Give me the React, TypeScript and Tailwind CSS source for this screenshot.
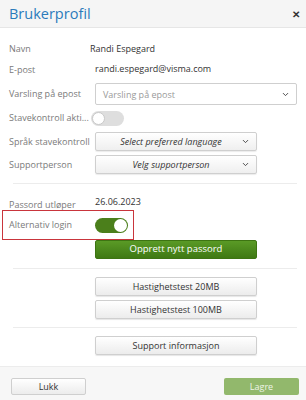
import { ChevronDown } from 'lucide-react';

const font = { fontFamily: '"Open Sans", "Liberation Sans", sans-serif' };

function Select({ text, wide, plain }: { text: string; wide?: boolean; plain?: boolean }) {
  return (
    <div
      className={`relative flex items-center border border-[#cfcfcf] rounded-[2px] ${
        wide ? 'w-[202px] h-[22px] bg-white' : 'w-[162px] h-[19px] bg-gradient-to-b from-white to-[#efefef] shadow-[0_1px_1px_rgba(0,0,0,0.08)]'
      }`}
    >
      <span
        className={`flex-1 text-[9px] leading-none whitespace-nowrap ${
          plain ? 'pl-[7px] text-[#9a9a9a]' : 'text-center italic text-[#333] pr-[10px]'
        }`}
      >
        {text}
      </span>
      <ChevronDown className="absolute right-[6px] w-[9px] h-[9px] text-[#444]" strokeWidth={2.5} />
    </div>
  );
}

function Toggle({ on }: { on?: boolean }) {
  return (
    <div
      className={`w-[33px] h-[15px] rounded-full flex items-center px-[1px] flex-shrink-0 ${
        on ? 'bg-[#4b7f1b] justify-end' : 'bg-[#dedede] justify-start'
      }`}
    >
      <div className={`w-[13px] h-[13px] rounded-full bg-white ${on ? '' : 'border border-[#c8c8c8]'}`} />
    </div>
  );
}

function Button({ children }: { children: React.ReactNode }) {
  return (
    <button className="w-[162px] h-[19px] ml-[95px] flex items-center justify-center border border-[#cfcfcf] rounded-[2px] bg-gradient-to-b from-white to-[#ececec] shadow-[0_1px_1px_rgba(0,0,0,0.1)] text-[9px] text-[#333]">
      {children}
    </button>
  );
}

const label = 'flex-shrink-0 whitespace-nowrap text-[9px] text-[#7a7a7a]';

export default function App() {
  return (
    <div className="w-[306px] h-[400px] overflow-hidden bg-white flex flex-col" style={font}>
      <div className="h-[28px] flex-shrink-0 bg-[#f5f5f5] border-b border-[#e6e6e6] flex items-center justify-between pl-[9px] pr-[6px]">
        <span className="text-[14.5px] text-[#2b7bbb]">Brukerprofil</span>
        <span className="text-[10px] font-bold text-[#333] leading-none">✕</span>
      </div>

      <div className="flex-1 min-h-0 relative">
        <div className="flex items-center h-[20px] mt-[11px] pl-[9px]">
          <span className={`${label} w-[81px]`}>Navn</span>
          <span className="text-[9px] text-[#333]">Randi Espegard</span>
        </div>
        <div className="flex items-center h-[20px] mt-[1px] pl-[9px]">
          <span className={`${label} w-[86px]`}>E-post</span>
          <span className="text-[9px] text-[#333] -mt-[2px]">randi.espegard@visma.com</span>
        </div>
        <div className="flex items-center mt-[3px] pl-[9px]">
          <span className={`${label} w-[86px]`}>Varsling på epost</span>
          <Select text="Varsling på epost" wide plain />
        </div>
        <div className="flex items-center h-[20px] mt-[3px] pl-[9px]">
          <span className={`${label} w-[82px]`}>Stavekontroll akti...</span>
          <Toggle />
        </div>
        <div className="flex items-center mt-[4px] pl-[9px]">
          <span className={`${label} w-[86px]`}>Språk stavekontroll</span>
          <Select text="Select preferred language" />
        </div>
        <div className="flex items-center mt-[4px] pl-[9px]">
          <span className={`${label} w-[86px]`}>Supportperson</span>
          <Select text="Velg supportperson" />
        </div>
        <div className="h-px bg-[#ececec] ml-[13px] mr-[9px] mt-[9px]" />

        <div className="flex items-center h-[18px] mt-[10px] pl-[9px]">
          <span className={`${label} w-[86px] mt-[4px]`}>Passord utløper</span>
          <span className="text-[9px] text-[#333] -mt-[2px]">26.06.2023</span>
        </div>
        <div className="relative flex items-center h-[24px] mt-[1px] pl-[9px]">
          <span className={`${label} w-[86px]`}>Alternativ login</span>
          <Toggle on />
          <div className="absolute left-[2px] top-[-3px] w-[132px] h-[30px] border border-[#c9353c]" />
        </div>
        <button className="w-[162px] h-[19px] ml-[95px] mt-[3px] flex items-center justify-center rounded-[2px] bg-gradient-to-b from-[#5a9a26] to-[#3f7913] border border-[#3d7412] text-[9.5px] text-white">
          Opprett nytt passord
        </button>
        <div className="h-px bg-[#ececec] ml-[13px] mr-[9px] mt-[9px]" />

        <div className="mt-[8px]">
          <Button>Hastighetstest 20MB</Button>
        </div>
        <div className="mt-[4px]">
          <Button>Hastighetstest 100MB</Button>
        </div>
        <div className="h-px bg-[#ececec] ml-[13px] mr-[9px] mt-[8px]" />
        <div className="mt-[8px]">
          <Button>Support informasjon</Button>
        </div>
      </div>

      <div className="h-[34px] flex-shrink-0 bg-[#f7f7f7] border-t border-[#ececec] flex items-start justify-between pt-[11px] pr-[7px] pl-[11px]">
        <button className="w-[75px] h-[17px] flex items-center justify-center border border-[#cfcfcf] rounded-[2px] bg-gradient-to-b from-white to-[#ececec] text-[9px] text-[#333]">
          Lukk
        </button>
        <button className="w-[75px] h-[17px] flex items-center justify-center rounded-[2px] bg-[#92b86c] text-[9px] text-[#eef4e6]">
          Lagre
        </button>
      </div>
    </div>
  );
}
